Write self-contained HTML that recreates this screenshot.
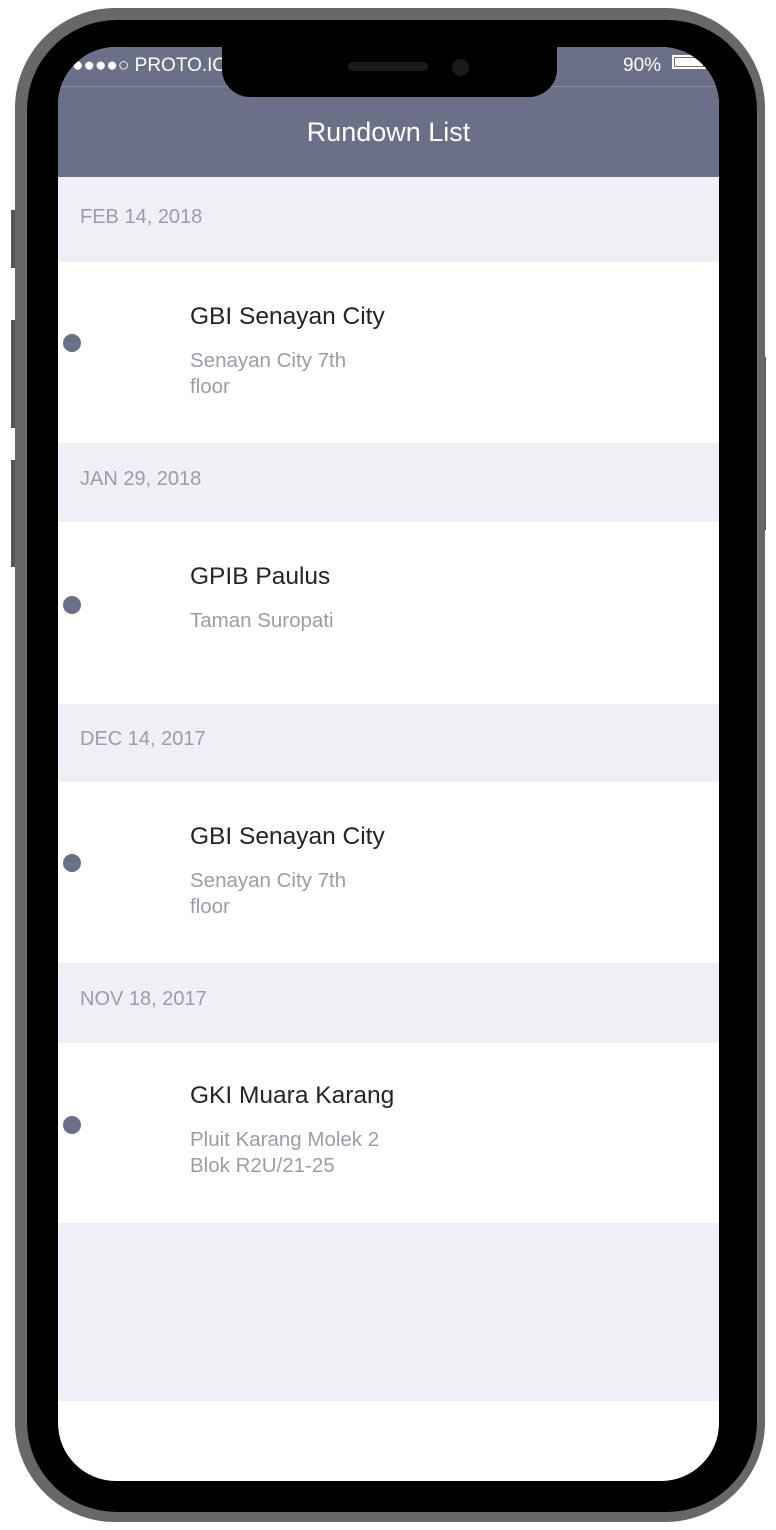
<!DOCTYPE html>
<html><head><meta charset="utf-8"><style>
*{margin:0;padding:0;box-sizing:border-box}
body{width:776px;height:1530px;background:#fff;position:relative;overflow:hidden;font-family:"Liberation Sans",sans-serif}
.abs{position:absolute}
.outer{left:15px;top:8px;width:750px;height:1514px;background:#686868;border-radius:100px}
.inner{left:27px;top:20px;width:730px;height:1492px;background:#000;border-radius:90px}
.screen{left:58px;top:47px;width:661px;height:1434px;background:#fff;border-radius:58px;overflow:hidden}
.btn{background:#555;width:5px}
.hdr{position:absolute;left:0;top:0;width:661px;height:130px;background:#6b7088}
.line{position:absolute;left:0;top:39px;width:661px;height:1px;background:#8a8ea3}
.title{position:absolute;top:70px;width:661px;text-align:center;color:#fff;font-size:27px}
.sec{position:absolute;left:0;width:661px;background:#eff0f5;color:#9a9cae;font-size:20px;padding-left:22px}
.item{position:absolute;left:0;width:661px;background:#fff}
.dot{position:absolute;left:5px;width:18px;height:18px;border-radius:50%;background:#6b7088}
.t{position:absolute;left:132px;font-size:24.5px;color:#23242c}
.s{position:absolute;left:132px;font-size:20.5px;color:#9a9cae;line-height:26px}
.notch{left:222px;top:47px;width:335px;height:50px;background:#000;border-radius:0 0 28px 28px}
</style></head><body>
<div class="abs btn" style="left:11px;top:210px;height:58px"></div>
<div class="abs btn" style="left:11px;top:320px;height:108px"></div>
<div class="abs btn" style="left:11px;top:460px;height:107px"></div>
<div class="abs btn" style="left:761px;top:357px;height:173px"></div>
<div class="abs outer"></div>
<div class="abs inner"></div>
<div class="abs screen">
 <div class="hdr"><div class="line"></div>
  <div style="position:absolute;left:14px;top:8px;color:#fff;font-size:19px">●●●●○ PROTO.IO</div>
  <div style="position:absolute;left:565px;top:8px;color:#fff;font-size:19px">90%</div>
  <div style="position:absolute;left:614px;top:8px;width:34px;height:14px;border:2px solid #fff;background:#6b7088"><div style="margin:1px;height:8px;width:28px;background:#fff"></div></div>
  <div class="title">Rundown List</div></div>
 <div class="sec" style="top:130px;height:85px;line-height:80px">FEB 14, 2018</div>
 <div class="item" style="top:215px;height:181px"><div class="dot" style="top:72px"></div><div class="t" style="top:41px">GBI Senayan City</div><div class="s" style="top:86px">Senayan City 7th<br>floor</div></div>
 <div class="sec" style="top:396px;height:79px;line-height:72px">JAN 29, 2018</div>
 <div class="item" style="top:475px;height:182px"><div class="dot" style="top:74px"></div><div class="t" style="top:41px">GPIB Paulus</div><div class="s" style="top:86px">Taman Suropati</div></div>
 <div class="sec" style="top:657px;height:78px;line-height:70px">DEC 14, 2017</div>
 <div class="item" style="top:735px;height:181px"><div class="dot" style="top:72px"></div><div class="t" style="top:41px">GBI Senayan City</div><div class="s" style="top:86px">Senayan City 7th<br>floor</div></div>
 <div class="sec" style="top:916px;height:80px;line-height:72px">NOV 18, 2017</div>
 <div class="item" style="top:996px;height:180px"><div class="dot" style="top:73px"></div><div class="t" style="top:39px">GKI Muara Karang</div><div class="s" style="top:84px">Pluit Karang Molek 2<br>Blok R2U/21-25</div></div>
 <div class="sec" style="top:1176px;height:178px"></div>
</div>
<div class="abs notch"></div>
<div class="abs" style="left:348px;top:62px;width:80px;height:9px;border-radius:5px;background:#1a1a1a"></div>
<div class="abs" style="left:452px;top:59px;width:17px;height:17px;border-radius:50%;background:#1a1a1a"></div>
</body></html>
